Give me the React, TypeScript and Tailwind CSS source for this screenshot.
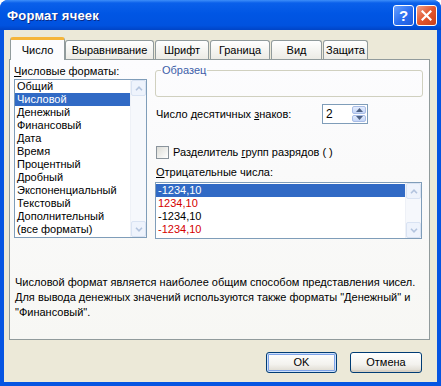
import React from 'react';

const formats = [
  'Общий',
  'Числовой',
  'Денежный',
  'Финансовый',
  'Дата',
  'Время',
  'Процентный',
  'Дробный',
  'Экспоненциальный',
  'Текстовый',
  'Дополнительный',
  '(все форматы)',
];

const negatives = [
  { text: '-1234,10', red: false },
  { text: '1234,10', red: true },
  { text: '-1234,10', red: false },
  { text: '-1234,10', red: true },
];

const tabs = [
  { label: 'Выравнивание', w: 'w-[89px]' },
  { label: 'Шрифт', w: 'w-[54px]' },
  { label: 'Граница', w: 'w-[60px]' },
  { label: 'Вид', w: 'w-[51px]' },
  { label: 'Защита', w: 'w-[45px]' },
];

const Chevron: React.FC<{ down?: boolean }> = ({ down }) => (
  <svg width="8" height="5" viewBox="0 0 8 5" className={down ? 'rotate-180' : ''}>
    <path d="M1 4.2 L4 1.2 L7 4.2" fill="none" stroke="#b3c4de" strokeWidth="1.6" />
  </svg>
);

// disabled-looking XP scrollbar used by both list boxes
const ScrollBar: React.FC = () => (
  <div className="w-[16px] h-full flex flex-col bg-[#f6f8fc] border-l border-[#eef1f7]">
    <div className="h-[16px] flex items-center justify-center rounded-[2px] border border-[#d9e3f3] bg-[#eef3fc]">
      <Chevron />
    </div>
    <div className="flex-1" />
    <div className="h-[16px] flex items-center justify-center rounded-[2px] border border-[#d9e3f3] bg-[#eef3fc]">
      <Chevron down />
    </div>
  </div>
);

const TitleBar: React.FC = () => (
  <div className="h-[30px] shrink-0 flex items-center pl-[7px] pr-[4px] rounded-t-[8px] bg-[linear-gradient(to_bottom,#3d8ef9_0%,#0a60ea_10%,#0056e4_45%,#0052df_85%,#0044c6_100%)]">
    <span className="text-white font-bold text-[13px] [text-shadow:1px_1px_0_#0c2a86] tracking-[0.2px]">
      Формат ячеек
    </span>
    <div className="ml-auto flex gap-[2px]">
      <div className="w-[21px] h-[21px] rounded-[3px] border border-white bg-[linear-gradient(135deg,#6aa1ff,#2a6ef0_55%,#1f5bdc)] flex items-center justify-center text-white font-bold text-[15px] leading-none">
        ?
      </div>
      <div className="w-[21px] h-[21px] rounded-[3px] border border-white bg-[linear-gradient(135deg,#f0a08a,#e2562d_50%,#c9401c)] flex items-center justify-center">
        <svg width="11" height="11" viewBox="0 0 11 11">
          <path d="M1.5 1.5 L9.5 9.5 M9.5 1.5 L1.5 9.5" stroke="#fff" strokeWidth="2.2" strokeLinecap="square" />
        </svg>
      </div>
    </div>
  </div>
);

const XpButton: React.FC<{ label: string; isDefault?: boolean }> = ({ label, isDefault }) => (
  <div
    className={
      'h-[21px] rounded-[3px] border border-[#003c74] flex items-center justify-center bg-[linear-gradient(to_bottom,#ffffff,#f3f2ee_60%,#dcd8cd)] ' +
      (isDefault
        ? 'w-[71px] shadow-[inset_0_0_0_1px_#cde0fb,inset_0_0_0_2px_#7ea3e8]'
        : 'w-[72px] shadow-[inset_0_-2px_0_#d6d0c5]')
    }
  >
    {label}
  </div>
);

const App: React.FC = () => {
  return (
    <div className="w-[441px] h-[386px] flex flex-col bg-[#0655e2] rounded-t-[8px] font-['Liberation_Sans',Arial,sans-serif] text-[11px] leading-[13px] text-black select-none">
      <TitleBar />

      <div className="flex-1 mx-[4px] mb-[4px] bg-[#ece9d8] flex flex-col px-[5px] pt-[7px]">
        {/* Tabs */}
        <div className="h-[22px] flex items-end pl-[1px] relative z-10">
          <div className="w-[55px] h-[23px] -mb-[1px] flex items-center justify-center bg-[#fcfcfe] border-x border-[#919b9c] rounded-t-[3px] border-t-[3px] border-t-[#f5b53a]">
            Число
          </div>
          <div className="flex items-end">
            {tabs.map((t) => (
              <div
                key={t.label}
                className={`${t.w} h-[19px] flex items-center justify-center border border-b-0 border-[#919b9c] rounded-t-[3px] bg-[linear-gradient(to_bottom,#ffffff,#f3f3ef_60%,#ecebe5)] mr-[1px]`}
              >
                {t.label}
              </div>
            ))}
          </div>
        </div>

        {/* Tab page */}
        <div className="w-[421px] h-[281px] border border-[#919b9c] bg-[linear-gradient(to_bottom,#fcfcfe,#f7f7f4)] flex flex-col">
          <div className="flex pl-[4px]">
            {/* left column */}
            <div className="flex flex-col w-[133px] pt-[5px]">
              <div>
                <u>Ч</u>исловые форматы:
              </div>
              <div className="mt-[1px] h-[159px] border border-[#7f9db9] bg-white flex">
                <div className="flex-1 flex flex-col">
                  {formats.map((f, i) => (
                    <div
                      key={f}
                      className={`h-[13px] pl-[2px] ${i === 1 ? 'bg-[#316ac5] text-white' : ''}`}
                    >
                      {f}
                    </div>
                  ))}
                </div>
                <ScrollBar />
              </div>
            </div>

            {/* right column */}
            <div className="flex flex-col w-[268px] ml-[8px]">
              <fieldset className="mt-[4px] h-[33px] border border-[#d0d0bf] rounded-[3px] px-[4px]">
                <legend className="px-[1px] ml-[1px] text-[#3c5ea8]">Образец</legend>
              </fieldset>

              <div className="mt-[7px] h-[20px] flex items-center">
                <div className="w-[167px] pl-[1px]">
                  Число десятичных <u>з</u>наков:
                </div>
                <div className="w-[46px] h-[20px] border border-[#7f9db9] bg-white flex">
                  <div className="flex-1 pl-[3px] flex items-center text-[12px]">2</div>
                  <div className="w-[15px] flex flex-col gap-[1px] p-[1px] pl-0">
                    {[false, true].map((down) => (
                      <div
                        key={String(down)}
                        className="flex-1 rounded-[2px] border border-[#a9bde6] bg-[linear-gradient(to_bottom,#e3ecfd,#c4d5f7)] flex items-center justify-center"
                      >
                        <svg width="7" height="4" viewBox="0 0 7 4" className={down ? 'rotate-180' : ''}>
                          <path d="M0 4 L3.5 0 L7 4 Z" fill="#4d6185" />
                        </svg>
                      </div>
                    ))}
                  </div>
                </div>
              </div>

              <div className="mt-[22px] h-[13px] flex items-center">
                <div className="ml-[1px] w-[13px] h-[13px] border border-[#8a949c] bg-[linear-gradient(135deg,#dcdcd6,#ffffff)]" />
                <div className="ml-[4px]">
                  Разделитель <u>г</u>рупп разрядов ( )
                </div>
              </div>

              <div className="mt-[7px] pl-[1px]">
                <u>О</u>трицательные числа:
              </div>
              <div className="mt-[3px] h-[57px] w-[267px] border border-[#7f9db9] bg-white flex">
                <div className="flex-1 flex flex-col pt-[1px]">
                  {negatives.map((n, i) => (
                    <div
                      key={i}
                      className={`h-[13px] pl-[2px] ${
                        i === 0 ? 'bg-[#316ac5] text-white' : n.red ? 'text-[#d40000]' : ''
                      }`}
                    >
                      {n.text}
                    </div>
                  ))}
                </div>
                <ScrollBar />
              </div>
            </div>
          </div>

          <p className="mt-[36px] pl-[5px] pr-[8px] leading-[15px]">
            Числовой формат является наиболее общим способом представления чисел.
            Для вывода денежных значений используются также форматы "Денежный" и
            "Финансовый".
          </p>
        </div>

        {/* Buttons */}
        <div className="mt-[12px] flex justify-end gap-[13px] pr-[10px]">
          <XpButton label="OK" isDefault />
          <XpButton label="Отмена" />
        </div>
      </div>
    </div>
  );
};

export default App;
